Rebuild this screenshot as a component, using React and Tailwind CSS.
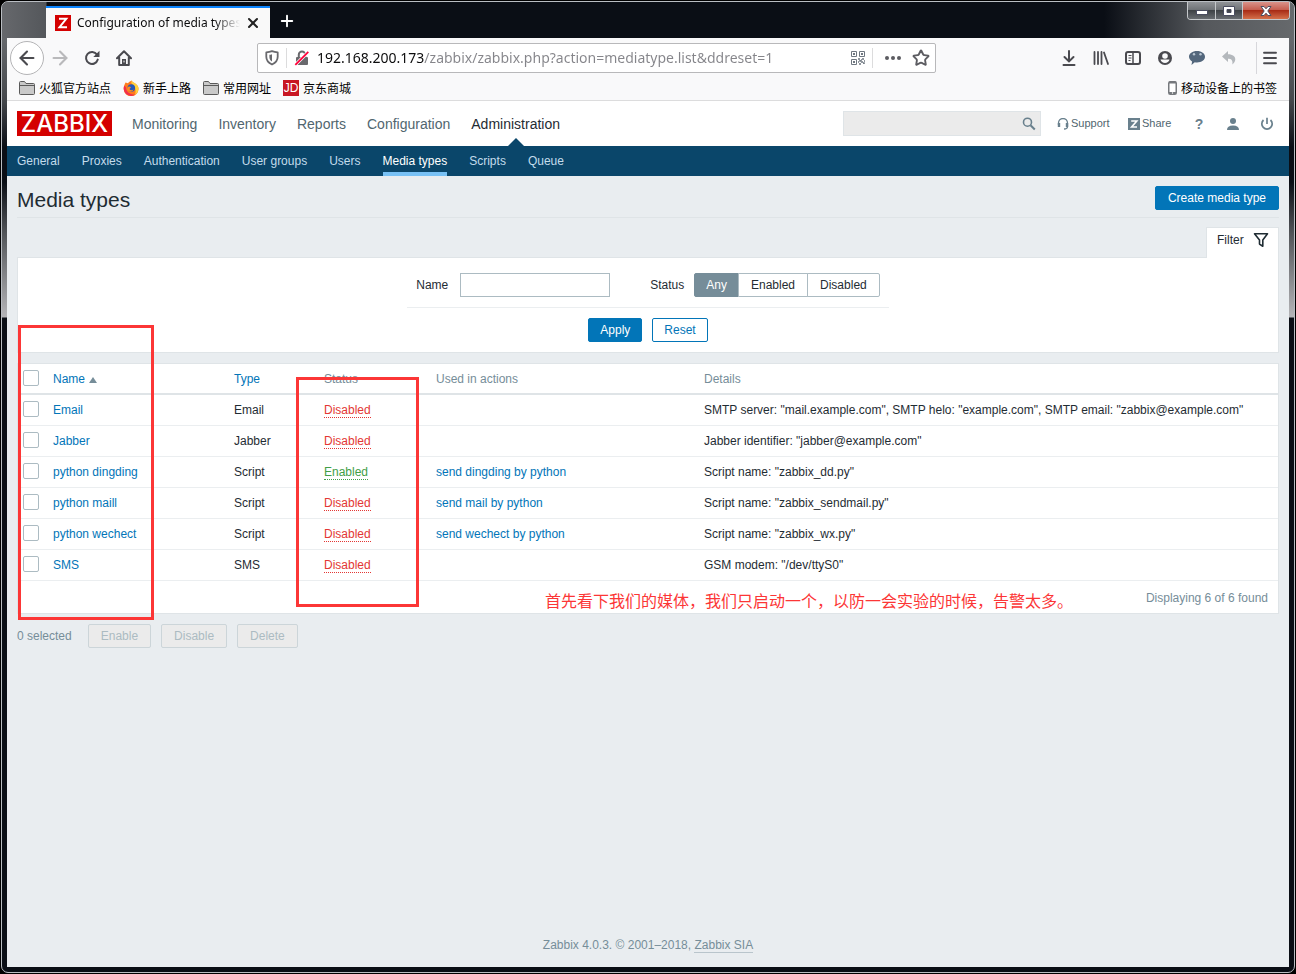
import { useState } from 'react'
import { ArrowLeft, ArrowRight, Menu, Star, X, Plus } from 'lucide-react'

const MAIN_MENU = ['Monitoring', 'Inventory', 'Reports', 'Configuration', 'Administration']
const SUB_MENU = ['General', 'Proxies', 'Authentication', 'User groups', 'Users', 'Media types', 'Scripts', 'Queue']
const STATUSES = ['Any', 'Enabled', 'Disabled']

const MEDIA_TYPES = [
  { name: 'Email', type: 'Email', enabled: false, action: '', details: 'SMTP server: "mail.example.com", SMTP helo: "example.com", SMTP email: "zabbix@example.com"' },
  { name: 'Jabber', type: 'Jabber', enabled: false, action: '', details: 'Jabber identifier: "jabber@example.com"' },
  { name: 'python dingding', type: 'Script', enabled: true, action: 'send dingding by python', details: 'Script name: "zabbix_dd.py"' },
  { name: 'python maill', type: 'Script', enabled: false, action: 'send mail by python', details: 'Script name: "zabbix_sendmail.py"' },
  { name: 'python wechect', type: 'Script', enabled: false, action: 'send wechect by python', details: 'Script name: "zabbix_wx.py"' },
  { name: 'SMS', type: 'SMS', enabled: false, action: '', details: 'GSM modem: "/dev/ttyS0"' },
]

/* Browser icons */
const ReloadIcon = () => (
  <svg width="16" height="16" viewBox="0 0 16 16" fill="none" stroke="#4a4a4f" strokeWidth="2">
    <path d="M13 4.6A6 6 0 1 0 13.8 9.6" strokeLinecap="round" />
    <path d="M15.5 .8V7H9.3z" fill="#4a4a4f" stroke="none" />
  </svg>
)

const HomeIcon = () => (
  <svg width="16" height="16" viewBox="0 0 16 16" fill="none" stroke="#4a4a4f" strokeWidth="2" strokeLinejoin="round" strokeLinecap="round">
    <path d="M1 8.2 8 1.3l7 6.9M3.2 7.5V15h9.6V7.5" />
    <path d="M6 9h4v6H6z" fill="#4a4a4f" stroke="none" />
    <path d="M8 11v1" stroke="#fff" strokeWidth="1" />
  </svg>
)

const ShieldIcon = () => (
  <svg width="14" height="16" viewBox="0 0 14 16" fill="none" stroke="#69696d" strokeWidth="1.8" strokeLinejoin="round">
    <path d="M7 1.2C5 2 3 2.3 1.3 2.4v4.4C1.3 10.4 3.6 13 7 14.5c3.4-1.5 5.7-4.1 5.7-7.700V2.4C11 2.3 9 2 7 1.2z" />
    <path d="M7 4.2c-1 .4-1.700.5-2.600.6v2.4c0 1.900 1 3.200 2.600 4.200z" fill="#69696d" stroke="none" />
  </svg>
)

const InsecureIcon = () => (
  <svg width="16" height="16" viewBox="0 0 16 16" fill="none">
    <path d="M4.800 7V4.800a3.200 3.200 0 0 1 6.400 0V7" stroke="#69696d" strokeWidth="2" />
    <rect x="2" y="7" width="12" height="8" rx="1" fill="#69696d" />
    <path d="M1.300 14.800 14.300 1.800" stroke="#fff" strokeWidth="3.200" />
    <path d="M1.300 14.800 14.300 1.800" stroke="#ff0039" strokeWidth="1.800" />
  </svg>
)

const QrIcon = () => (
  <svg width="14" height="14" viewBox="0 0 14 14" fill="none" stroke="#6f7780">
    <path d="M.5 .5h5v5h-5zM8.500 .5h5v5h-5zM.5 8.500h5v5h-5z" />
    <path d="M2 3h2M10 3h2M2 11h2" strokeWidth="2" />
    <path d="M7 8h2v2h2v2h2v2M8 13h2M11 8h3M13 10h1M7 11h1M10 9h1" strokeWidth="1.500" strokeDasharray="2 1" />
  </svg>
)

const DownloadIcon = () => (
  <svg width="16" height="16" viewBox="0 0 16 16" fill="none" stroke="#4a4a4f" strokeWidth="2" strokeLinecap="round">
    <path d="M8 1v10M3.500 7 8 11.400 12.500 7M2.500 15h11" />
  </svg>
)

const LibraryIcon = () => (
  <svg width="16" height="16" viewBox="0 0 16 16" fill="none" stroke="#4a4a4f" strokeWidth="1.800" strokeLinecap="round">
    <path d="M1.500 2v12M5 2v12M8.500 2v12M11 2.500 15 14" />
  </svg>
)

const SidebarIcon = () => (
  <svg width="16" height="16" viewBox="0 0 16 16" fill="none" stroke="#4a4a4f">
    <rect x="1" y="2" width="14" height="12" rx="2" strokeWidth="2" />
    <path d="M8 2v12" strokeWidth="1.500" />
    <path d="M3.500 5.500h3M3.500 8h3M3.500 10.500h2" />
  </svg>
)

const AccountIcon = () => (
  <svg width="16" height="16" viewBox="0 0 16 16">
    <circle cx="8" cy="8" r="7" fill="#4a4a4f" />
    <circle cx="8" cy="6" r="2.800" fill="#f9f9fa" />
    <path d="M3.500 9.500h9c-.5 2.300-2.300 3.500-4.500 3.500s-4-1.200-4.500-3.500z" fill="#f9f9fa" />
  </svg>
)

const ChatIcon = () => (
  <svg width="18" height="16" viewBox="0 0 18 16">
    <path d="M9 1c4.600 0 8 2.500 8 5.800s-3.400 5.700-8 5.700c-.8 0-1.500 0-2.200-.2L3.500 15l.6-3.600C2.200 10.300 1 8.700 1 6.800 1 3.500 4.400 1 9 1z" fill="#53677c" />
    <circle cx="6" cy="4.200" r="1.200" fill="#b9c6d2" />
    <circle cx="12.500" cy="4.200" r="1.200" fill="#b9c6d2" />
  </svg>
)

const UndoIcon = () => (
  <svg width="16" height="16" viewBox="0 0 16 16">
    <path d="M7 1 1 6.500 7 12V8.800c3.500-.3 5 1.400 4.300 5.700C16.500 10 14.800 4.300 7 4.200z" fill="#b4b8bc" />
  </svg>
)

const FolderIcon = () => (
  <svg width="16" height="14" viewBox="0 0 16 14" fill="#c9c9c9" stroke="#5a5a5a">
    <path d="M.5 12.500v-11a1 1 0 0 1 1-1h4l1.500 2h7.500a1 1 0 0 1 1 1v9a1 1 0 0 1-1 1h-13a1 1 0 0 1-1-1z" />
    <path d="M.5 4.500h15" />
  </svg>
)

const FirefoxIcon = () => (
  <svg width="16" height="16" viewBox="0 0 16 16">
    <path d="M2.500 2.500 5 3.200C6 1.500 7.500 1 9 .5c0 1 .5 1.500 2 2.300 3 1.700 4.500 3.400 4.500 6A7.400 7.400 0 0 1 .7 9C.6 6.500 1.500 4.500 2.500 2.500z" fill="#ff7b1c" />
    <path d="M9 .5c0 1 .5 1.500 2 2.300 3 1.700 4.500 3.400 4.500 6 0 2.500-1.500 4.700-3.500 6 1.200-3 .8-8.500-3-10.800C7.800 3 8.300 1.500 9 .5z" fill="#ffd23c" />
    <path d="M.7 9A7.400 7.400 0 0 0 12 14.800C8 14.500 3.500 13 3 7.500L1.300 5.500C.8 6.800.6 8 .7 9z" fill="#f2304b" />
    <circle cx="8.300" cy="8" r="3.800" fill="#2458b8" />
    <path d="M4.500 7.500c1-1.500 2.500-1 3.500-.3L6.500 9c.8 1.500 2.800 1.500 4 .5-1 3-5.500 3-6.500-.2z" fill="#ff8a1e" />
  </svg>
)

const JdIcon = () => (
  <span className="flex h-4 w-4 items-center justify-center overflow-hidden bg-[#c81623] font-['Liberation_Sans',sans-serif] text-xs leading-4 text-white">JD</span>
)

const PhoneIcon = () => (
  <svg width="9" height="14" viewBox="0 0 9 14">
    <rect x=".75" y=".75" width="7.500" height="12.500" rx="1.500" fill="#fff" stroke="#76797d" strokeWidth="1.500" />
    <path d="M1 1.500h7M1 12h7" stroke="#76797d" strokeWidth="2" />
    <circle cx="4.500" cy="12" r=".7" fill="#fff" />
  </svg>
)

/* Zabbix icons */
const SearchIcon = () => (
  <svg width="14" height="14" viewBox="0 0 14 14" fill="none" stroke="#69808d">
    <circle cx="5.500" cy="5.200" r="4" strokeWidth="1.600" />
    <path d="m8.500 8.200 4.300 4.300" strokeWidth="2" />
  </svg>
)

const SupportIcon = () => (
  <svg width="12" height="12" viewBox="0 0 12 12" fill="none" stroke="#69808d">
    <path d="M1.500 7V5a4.500 4.500 0 0 1 9 0v3.500c0 1.500-1 2.500-3.500 2.500" strokeWidth="1.300" />
    <path d="M2 5v4M10 5v4" strokeWidth="2.400" />
  </svg>
)

const ShareIcon = () => (
  <svg width="12" height="12" viewBox="0 0 12 12">
    <rect width="12" height="12" fill="#69808d" />
    <path d="M3.200 3h5.600L3.600 9h5.400" fill="none" stroke="#fff" strokeWidth="1.600" />
  </svg>
)

const UserIcon = () => (
  <svg width="14" height="14" viewBox="0 0 14 14" fill="#69808d">
    <circle cx="7" cy="4" r="3" />
    <path d="M1 13c0-3 2-4.500 6-4.500s6 1.500 6 4.500z" />
  </svg>
)

const PowerIcon = () => (
  <svg width="14" height="14" viewBox="0 0 14 14" fill="none" stroke="#69808d" strokeWidth="1.700">
    <path d="M3.500 3A5.200 5.200 0 1 0 10.500 3M7 .8V7" />
  </svg>
)

const FilterIcon = () => (
  <svg width="16" height="16" viewBox="0 0 16 16" fill="none" stroke="#1f2c33" strokeWidth="1.600" strokeLinejoin="round">
    <path d="M1.500 1.800h13L9.800 8v6.300L6.500 12V8z" />
  </svg>
)

function WindowTitle() {
  return (
    <div className="-mx-[5px] flex h-9 rounded-t-[6px] bg-[linear-gradient(to_right,#66686c,#54575b_44px,#0a0e15_45px,#0a0e15_calc(100%-190px),#55585c_calc(100%-90px),#66696c)] pl-11">
      <div className="flex h-8 w-56 items-center self-end border-t-2 border-[#0a84ff] bg-[#f9f9f9] pl-[9px]">
        <svg width="16" height="16" viewBox="0 0 16 16">
          <rect width="16" height="16" fill="#d40000" />
          <path d="M4 3.800h7.300L4.500 12.200h7.500" fill="none" stroke="#fff" strokeWidth="2" />
        </svg>
        <span className="ml-1.5 w-[163px] overflow-hidden whitespace-nowrap font-['Noto_Sans',sans-serif] text-xs text-[#0c0c0d] [mask-image:linear-gradient(to_right,#000_138px,transparent)]">
          Configuration of media types
        </span>
        <button aria-label="Close tab" className="flex w-[26px] justify-center">
          <X size={16} strokeWidth={3} color="#222" />
        </button>
      </div>
      <button aria-label="New tab" className="flex w-[34px] items-center justify-center pt-0.5">
        <Plus size={18} strokeWidth={2.5} color="#fff" />
      </button>
      {/* Window controls */}
      <div className="ml-auto mr-1 flex h-[18px] overflow-hidden rounded-b-[4px] border border-t-0 border-[#c5c8cb]">
        <button aria-label="Minimize" className="flex w-7 items-end justify-center border-r border-[#c5c8cb] bg-[linear-gradient(#909397,#6c7074_50%,#3e4246_50%,#676b70)] pb-1">
          <svg width="12" height="5" viewBox="0 0 12 5"><rect x=".5" y=".5" width="11" height="4" fill="#fff" stroke="#4a4d60" /></svg>
        </button>
        <button aria-label="Maximize" className="flex w-[27px] items-center justify-center border-r border-[#c5c8cb] bg-[linear-gradient(#909397,#6c7074_50%,#3e4246_50%,#676b70)]">
          <svg width="12" height="10" viewBox="0 0 12 10"><path d="M.5 .5h11v9H.5zM4 3.500h4v3H4z" fill="#fff" fillRule="evenodd" stroke="#4a4d60" /></svg>
        </button>
        <button aria-label="Close" className="flex w-[46px] items-center justify-center bg-[linear-gradient(#d9938a,#c4594a_50%,#a82c16_50%,#d4704a)]">
          <svg width="12" height="10" viewBox="0 0 12 10"><path d="M1 .5h3l2 2.300L8 .5h3L7.800 5 11 9.500H8L6 7.200 4 9.500H1L4.200 5z" fill="#fff" stroke="#4a4d60" /></svg>
        </button>
      </div>
    </div>
  )
}

function BrowserToolbar() {
  return (
    <div className="flex h-[39px] items-center bg-[#f9f9fa] pl-[3px] pr-[5px]">
      <button aria-label="Back" className="flex h-[34px] w-[34px] items-center justify-center rounded-full border border-[#b4b4b6] bg-white">
        <ArrowLeft size={22} strokeWidth={2.3} color="#4a4a4f" />
      </button>
      <button aria-label="Forward" className="flex w-8 justify-center"><ArrowRight size={22} strokeWidth={2.3} color="#b9b9bb" /></button>
      <button aria-label="Reload" className="flex w-8 justify-center"><ReloadIcon /></button>
      <button aria-label="Home" className="flex w-8 justify-center"><HomeIcon /></button>

      {/* Address bar */}
      <div className="mx-[117px] flex h-[30px] min-w-0 flex-1 items-center rounded-xs border border-[#b8b8ba] bg-white">
        <button aria-label="Tracking protection" className="flex h-6 w-7 items-center justify-center"><ShieldIcon /></button>
        <button aria-label="Connection is not secure" className="flex h-5 w-[31px] items-center justify-center border-l border-[#dcdcdd]"><InsecureIcon /></button>
        <input
          aria-label="Address"
          defaultValue="192.168.200.173/zabbix/zabbix.php?action=mediatype.list&ddreset=1"
          className="min-w-0 flex-1 bg-[linear-gradient(to_right,#0c0c0d_107px,#85858a_107px)] bg-clip-text font-['Noto_Sans',sans-serif] text-sm text-transparent outline-none"
        />
        <button aria-label="QR code" className="flex w-7 justify-center"><QrIcon /></button>
        <div className="flex h-5 items-center border-l border-[#dcdcdd] pl-1.5">
          <button aria-label="Page actions" className="flex w-7 justify-center">
            <svg width="16" height="4" viewBox="0 0 16 4" fill="#5c5c61"><circle cx="2" cy="2" r="2" /><circle cx="8" cy="2" r="2" /><circle cx="14" cy="2" r="2" /></svg>
          </button>
          <button aria-label="Bookmark this page" className="flex w-7 justify-center"><Star size={18} strokeWidth={2.5} color="#5c5c61" /></button>
        </div>
      </div>

      <button aria-label="Downloads" className="flex w-8 justify-center"><DownloadIcon /></button>
      <button aria-label="Library" className="flex w-8 justify-center"><LibraryIcon /></button>
      <button aria-label="Sidebars" className="flex w-8 justify-center"><SidebarIcon /></button>
      <button aria-label="Account" className="flex w-8 justify-center"><AccountIcon /></button>
      <button aria-label="Chat" className="flex w-8 justify-center"><ChatIcon /></button>
      <button aria-label="Undo" className="flex w-8 justify-center"><UndoIcon /></button>
      <button aria-label="Menu" className="ml-[11px] flex h-8 w-7 items-center justify-center border-l border-[#d7d7db] pr-0.5">
        <Menu size={18} strokeWidth={2.5} color="#4a4a4f" />
      </button>
    </div>
  )
}

function Bookmarks() {
  return (
    <div className="flex h-6 items-center gap-3 border-b border-[#dcdcdd] bg-[#f9f9fa] px-3 pb-0.5 font-['Noto_Sans_CJK_SC',sans-serif] text-xs text-black">
      <a href="#" className="flex items-center gap-1"><FolderIcon />火狐官方站点</a>
      <a href="#" className="flex items-center gap-1"><FirefoxIcon />新手上路</a>
      <a href="#" className="flex items-center gap-1"><FolderIcon />常用网址</a>
      <a href="#" className="flex items-center gap-1"><JdIcon />京东商城</a>
      <a href="#" className="ml-auto flex items-center gap-1"><PhoneIcon />移动设备上的书签</a>
    </div>
  )
}

function ZabbixHeader() {
  return (
    <header>
      <div className="flex h-[45px] items-center bg-white pl-[10px] pr-[13px]">
        <a href="#" className="flex h-[25px] w-[95px] items-center justify-center bg-[#d40000] font-['Inter',sans-serif] text-2xl leading-[25px] font-medium text-white">ZABBIX</a>
        <nav className="ml-5 flex h-full gap-[21px] text-sm text-[#51666f]">
          {MAIN_MENU.map(item => (
            <a key={item} href="#" className={`relative flex items-center ${item === 'Administration' ? 'text-[#1f2c33]' : ''}`}>
              {item}
              {item === 'Administration' && (
                <svg width="16" height="8" viewBox="0 0 16 8" className="absolute bottom-0 left-1/2 -translate-x-1/2">
                  <path d="M0 8 8 0l8 8z" fill="#0a466a" />
                </svg>
              )}
            </a>
          ))}
        </nav>
        <div className="ml-auto flex h-[25px] w-[198px] items-center border border-[#dfe4e7] bg-[#ebebeb] pr-1">
          <input aria-label="Search" className="min-w-0 flex-1 px-1 text-xs outline-none" />
          <button aria-label="Search button"><SearchIcon /></button>
        </div>
        <div className="ml-4 flex items-center text-[11px] text-[#51666f]">
          <a href="#" className="flex w-[71px] items-center gap-0.5"><SupportIcon />Support</a>
          <a href="#" className="flex w-[62px] items-center gap-0.5"><ShareIcon />Share</a>
          <a href="#" aria-label="Help" className="w-[18px] text-center text-sm font-bold leading-4 text-[#69808d]">?</a>
          <a href="#" aria-label="Profile" className="flex w-[50px] justify-center"><UserIcon /></a>
          <a href="#" aria-label="Sign out" className="flex w-[18px] justify-center"><PowerIcon /></a>
        </div>
      </div>
      <nav className="flex h-[30px] gap-[22px] bg-[#0a466a] px-[10px] text-xs text-[#c3dcec]">
        {SUB_MENU.map(item => (
          <a key={item} href="#"
            className={`flex items-center border-b-4 pt-1 ${item === 'Media types' ? 'border-[#78c1f5] text-white' : 'border-transparent'}`}>
            {item}
          </a>
        ))}
      </nav>
    </header>
  )
}

function Filter() {
  const [status, setStatus] = useState('Any')

  return (
    <section className="mt-[9px]">
      <div className="relative -mb-px flex justify-end">
        <a href="#" className="flex h-[31px] w-[73px] items-center justify-between border border-b-0 border-[#dfe4e7] bg-white pb-1.5 pl-[10px] pr-[9px]">
          Filter <FilterIcon />
        </a>
      </div>
      <form onSubmit={e => e.preventDefault()} className="flex flex-col items-center border border-[#dfe4e7] bg-white pb-[10px] pt-[15px]">
        <div className="flex items-center border-b border-[#ebeef0] px-[9px] pb-[10px]">
          <label htmlFor="filter-name" className="w-[34px]">Name</label>
          <input id="filter-name" className="ml-[10px] h-6 w-[150px] border border-[#acbbc2] px-1 outline-none" />
          <span className="ml-10 mr-[10px]">Status</span>
          <div className="flex h-6">
            {STATUSES.map(s => (
              <label key={s}
                className={`-ml-px flex items-center border px-3 first:ml-0 first:rounded-l-xs first:px-[11px] last:rounded-r-xs
                  ${status === s ? 'border-[#768d99] bg-[#768d99] text-white' : 'border-[#acbbc2] bg-white'}`}>
                <input type="radio" name="status" className="sr-only" checked={status === s} onChange={() => setStatus(s)} />
                {s}
              </label>
            ))}
          </div>
        </div>
        <div className="flex gap-[10px] pt-[10px]">
          <button className="h-6 rounded-xs border border-[#0275b8] bg-[#0275b8] px-[11px] text-white">Apply</button>
          <button type="reset" onClick={() => setStatus('Any')} className="h-6 rounded-xs border border-[#0275b8] bg-white px-[11px] text-[#0275b8]">Reset</button>
        </div>
      </form>
    </section>
  )
}

const Checkbox = ({ label }) => (
  <input type="checkbox" aria-label={label} className="mb-0.5 block h-4 w-4 appearance-none rounded-xs border border-[#acbbc2] bg-white" />
)

function MediaTable() {
  return (
    <div className="relative mt-[10px] border border-[#dfe4e7] bg-white">
      <table className="w-full table-fixed border-separate border-spacing-0 text-left [&_td]:px-[5px] [&_th]:px-[5px]">
        <thead>
          <tr className="h-[31px] text-[#768d99] [&>th]:border-b-2 [&>th]:border-[#dfe4e7] [&>th]:font-normal">
            <th className="w-[30px]"><Checkbox label="Select all" /></th>
            <th className="w-[181px]">
              <a href="#" className="flex items-center gap-1 text-[#0275b8]">
                Name
                <svg width="8" height="6" viewBox="0 0 8 6" className="mt-0.5"><path d="M0 6 4 0l4 6z" fill="#768d99" /></svg>
              </a>
            </th>
            <th className="w-[90px]"><a href="#" className="text-[#0275b8]">Type</a></th>
            <th className="w-28">Status</th>
            <th className="w-[268px]">Used in actions</th>
            <th>Details</th>
          </tr>
        </thead>
        <tbody>
          {MEDIA_TYPES.map(m => (
            <tr key={m.name} className="h-[31px] [&>td]:border-b [&>td]:border-[#ebeef0]">
              <td><Checkbox label={m.name} /></td>
              <td><a href="#" className="text-[#0275b8]">{m.name}</a></td>
              <td>{m.type}</td>
              <td>
                <a href="#" className={`border-b border-dotted ${m.enabled ? 'border-[#429e47] text-[#429e47]' : 'border-[#e33734] text-[#e33734]'}`}>
                  {m.enabled ? 'Enabled' : 'Disabled'}
                </a>
              </td>
              <td>{m.action && <a href="#" className="text-[#0275b8]">{m.action}</a>}</td>
              <td className="whitespace-nowrap">{m.details}</td>
            </tr>
          ))}
        </tbody>
      </table>
      <div className="flex h-8 items-center justify-end px-[10px] pt-0.5 text-[#768d99]">Displaying 6 of 6 found</div>

      {/* Red markup over the table */}
      <div className="pointer-events-none absolute -top-[39px] left-0 h-[295px] w-[136px] border-3 border-[#fc3636]" />
      <div className="pointer-events-none absolute left-[278px] top-[13px] h-[230px] w-[123px] border-3 border-[#fc3636]" />
      <p className="absolute left-[527px] top-56 whitespace-nowrap font-['Noto_Sans_CJK_SC',sans-serif] text-base text-[#fc3636]">
        首先看下我们的媒体，我们只启动一个，以防一会实验的时候，告警太多。
      </p>
    </div>
  )
}

export default function App() {
  return (
    <div className="flex min-h-screen bg-black p-px font-['Liberation_Sans',Arial,sans-serif]">
      <div className="flex min-w-0 flex-1 flex-col rounded-[7px] border border-[#b9bdc2] bg-[#0a0e15] bg-[linear-gradient(#65686c_38px,#45484c_98px,#0a0e15_145px,#0a0e15_180px,#505357_230px,#b5b5b8_315px,#0a0e15_316px)] px-[5px] pb-[5px]">
        <WindowTitle />
        <BrowserToolbar />
        <Bookmarks />
        <ZabbixHeader />
        <main className="flex flex-1 flex-col bg-[#e9edf0] px-[10px] text-xs text-[#1f2c33]">
          <div className="flex h-[42px] items-center justify-between border-b border-[#dfe4e7] pt-[3px]">
            <h1 className="pt-[3px] text-[21px] leading-6">Media types</h1>
            <button className="h-6 rounded-xs border border-[#0275b8] bg-[#0275b8] px-3 text-white">Create media type</button>
          </div>
          <Filter />
          <MediaTable />
          <div className="mt-[10px] flex items-center gap-[10px] text-[#768d99]">
            <span className="mr-1.5">0 selected</span>
            {['Enable', 'Disable', 'Delete'].map(a => (
              <button key={a} disabled className="h-6 rounded-xs border border-[#ccd5d9] bg-[#ebebeb] px-3 text-[#acbbc2]">{a}</button>
            ))}
          </div>
          <footer className="mt-auto pb-[14px] text-center text-[#768d99]">
            Zabbix 4.0.3. © 2001–2018, <a href="#" className="border-b border-[#b9c5cc]">Zabbix SIA</a>
          </footer>
        </main>
      </div>
    </div>
  )
}
